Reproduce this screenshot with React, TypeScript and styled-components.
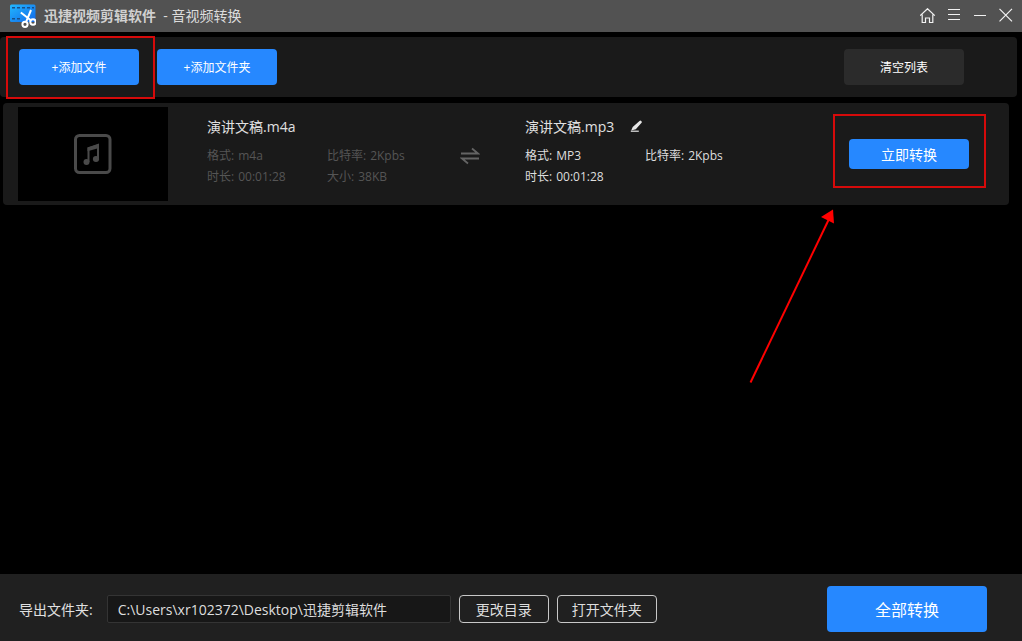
import React from "react";
import styled, { createGlobalStyle } from "styled-components";

const GlobalStyle = createGlobalStyle`
  * { box-sizing: border-box; }
  body {
    margin: 0;
    background: #000;
    color: #e0e0e0;
    font-family: "Open Sans", "Noto Sans CJK SC", sans-serif;
    font-size: 12px;
  }
  button, input { font-family: inherit; }
  h1, h2, p, dl, dd { margin: 0; }
`;

const Page = styled.div`
  display: flex;
  flex-direction: column;
  min-height: 100vh;
`;

const TitleBar = styled.header`
  display: flex;
  align-items: center;
  height: 32px;
  padding: 0 8px;
  background: #525252;
`;

const AppTitle = styled.h1`
  margin-left: 8px;
  font-size: 14px;
  line-height: 20px;
  font-weight: 400;
  color: #dcdcdc;
  white-space: pre;
`;

const AppName = styled.strong`
  font-weight: 700;
  color: #d0d0d0;
`;

const WindowControls = styled.div`
  display: flex;
  gap: 10px;
  margin-left: auto;
`;

const IconButton = styled.button`
  display: flex;
  padding: 0;
  border: 0;
  background: none;
  color: #f2f2f2;
  cursor: pointer;
`;

const Toolbar = styled.section`
  display: flex;
  align-items: center;
  gap: 18px;
  height: 60px;
  margin: 5px 5px 6px 0;
  padding: 0 53px 0 19px;
  border-radius: 4px;
  background: #1a1a1a;
`;

const Button = styled.button<{
  $w: number;
  $h: number;
  $size?: number;
  $tone?: "primary" | "muted" | "outline";
}>`
  flex: none;
  width: ${(p) => p.$w}px;
  height: ${(p) => p.$h}px;
  padding: 0;
  border: ${(p) => (p.$tone === "outline" ? "1px solid #c8c8c8" : "0")};
  border-radius: 4px;
  background: ${(p) =>
    p.$tone === "outline" ? "transparent" : p.$tone === "muted" ? "#2b2b2b" : "#2688ff"};
  color: ${(p) => (p.$tone === "outline" ? "#dedede" : "#fff")};
  font-size: ${(p) => p.$size ?? 12}px;
  cursor: pointer;
`;

const PushRight = styled.div`
  position: relative;
  display: flex;
  margin-left: auto;
`;

const Marked = styled.div`
  position: relative;
  display: flex;
`;

const Highlight = styled.span<{ $inset: string }>`
  position: absolute;
  inset: ${(p) => p.$inset};
  border: 2px solid #d60a0a;
  pointer-events: none;
`;

const Arrow = styled.svg`
  position: absolute;
  top: 69px;
  left: -101px;
  pointer-events: none;
`;

const FileList = styled.main`
  flex: 1;
  padding: 0 13px 0 3px;
`;

const FileRow = styled.article`
  display: flex;
  align-items: center;
  min-height: 102px;
  padding: 4px 40px 4px 15px;
  border-radius: 4px;
  background: #1a1a1a;
`;

const Thumbnail = styled.div`
  display: flex;
  align-items: center;
  justify-content: center;
  flex: none;
  width: 150px;
  height: 94px;
  background: #000;
`;

const FileInfo = styled.section`
  flex: none;
  width: 240px;
  padding-bottom: 4px;
`;

const FileName = styled.h2`
  display: flex;
  align-items: center;
  gap: 16px;
  margin-bottom: 8px;
  font-size: 14px;
  line-height: 20px;
  font-weight: 400;
`;

const Details = styled.dl<{ $dim?: boolean }>`
  display: grid;
  grid-template-columns: 120px 120px;
  line-height: 21px;
  color: ${(p) => (p.$dim ? "#555" : "#dedede")};
`;

const Detail = styled.div`
  display: flex;
  gap: 4px;
`;

const Conversion = styled.div`
  display: flex;
  align-items: center;
  margin-left: 39px;
`;

const SwapSlot = styled.div`
  display: flex;
  flex: none;
  width: 78px;
  padding: 4px 0 0 13px;
`;

const Footer = styled.footer`
  display: flex;
  align-items: center;
  gap: 8px;
  min-height: 67px;
  padding: 2px 35px 0 19px;
  background: #202020;
`;

const PathLabel = styled.label`
  flex: none;
  margin-right: 6px;
  font-size: 14px;
`;

const PathInput = styled.input`
  flex: 0 1 344px;
  min-width: 0;
  height: 28px;
  padding: 0 10px;
  border: 1px solid #343434;
  border-radius: 2px;
  background: #171717;
  color: #dedede;
  font-size: 14px;
`;

const Logo = () => (
  <svg width="28" height="28" viewBox="0 0 28 28" aria-hidden="true">
    <defs>
      <linearGradient id="film" x1="0" y1="0" x2="1" y2="1">
        <stop offset="0" stopColor="#22b8ff" />
        <stop offset="1" stopColor="#1267e8" />
      </linearGradient>
    </defs>
    <rect x="2" y="2.5" width="25.5" height="17.5" rx="1.5" fill="url(#film)" />
    <path d="M4 5.8h22M4 16.8h10" stroke="#1a4f86" strokeWidth="1.6" strokeDasharray="3 2" />
    <g fill="none" stroke="#fff" strokeWidth="2">
      <path d="M23 8 18 20.2M12.8 10.5 22.8 18.3" />
      <circle cx="17" cy="22.3" r="2.6" />
      <circle cx="25" cy="20" r="2.7" />
    </g>
  </svg>
);

const HomeIcon = () => (
  <svg width="16" height="16" viewBox="0 0 16 16" fill="none" stroke="currentColor" strokeWidth="1.2">
    <path d="M.2 7.6 7.5.7 14.8 7.6M2.2 6.5v8h3.3V10h4v4.5h3.3v-8" />
  </svg>
);
const MenuIcon = () => (
  <svg width="16" height="16" viewBox="0 0 16 16" stroke="currentColor">
    <path d="M2 1.5h12M2 6.5h12M2 11.5h12" />
  </svg>
);
const MinimizeIcon = () => (
  <svg width="16" height="16" viewBox="0 0 16 16" stroke="currentColor">
    <path d="M2 7.5h12" />
  </svg>
);
const CloseIcon = () => (
  <svg width="16" height="16" viewBox="0 0 16 16" stroke="currentColor" strokeWidth="1.2">
    <path d="m1.5.8 12.5 12.5M14 .8 1.5 13.3" />
  </svg>
);

const MusicIcon = () => (
  <svg width="38" height="40" viewBox="0 0 38 40" aria-hidden="true">
    <rect x="1.5" y="1.5" width="34.5" height="37" rx="4" fill="none" stroke="#4a4a4a" strokeWidth="3" />
    <path d="M14.5 28V14.2l9.5-3.2v13.5" fill="none" stroke="#4a4a4a" strokeWidth="2" />
    <path d="M13.5 13.5 25 10v4l-11.5 3.3z" fill="#4a4a4a" />
    <ellipse cx="12.5" cy="28" rx="3" ry="2.9" fill="#4a4a4a" />
    <ellipse cx="22" cy="25" rx="3.1" ry="2.9" fill="#4a4a4a" />
  </svg>
);

const SwapIcon = () => (
  <svg width="20" height="18" viewBox="0 0 20 18" fill="none" stroke="#646464" strokeWidth="1.8" aria-hidden="true">
    <path d="M1 6.5h17L12 1.5M19 11.5H2L8 16.5" />
  </svg>
);

const PencilIcon = () => (
  <svg width="14" height="14" viewBox="0 0 14 14" fill="#e6e6e6">
    <path d="M9.5.9q.8-.7 1.7 0t.6 1.7L5.8 9.2 1.2 10.4 2.7 7.1z" />
    <path d="M.8 10.6h8v1.2h-8z" />
  </svg>
);

type Field = [string, string];

const source: Field[] = [
  ["格式:", "m4a"],
  ["比特率:", "2Kpbs"],
  ["时长:", "00:01:28"],
  ["大小:", "38KB"],
];
const target: Field[] = [
  ["格式:", "MP3"],
  ["比特率:", "2Kpbs"],
  ["时长:", "00:01:28"],
];

const FieldList = ({ fields, dim }: { fields: Field[]; dim?: boolean }) => (
  <Details $dim={dim}>
    {fields.map(([label, value]) => (
      <Detail key={label}>
        <dt>{label}</dt>
        <dd>{value}</dd>
      </Detail>
    ))}
  </Details>
);

export default function App() {
  return (
    <Page>
      <GlobalStyle />
      <TitleBar>
        <Logo />
        <AppTitle>
          <AppName>迅捷视频剪辑软件</AppName>
          {"  - 音视频转换"}
        </AppTitle>
        <WindowControls>
          <IconButton aria-label="主页"><HomeIcon /></IconButton>
          <IconButton aria-label="菜单"><MenuIcon /></IconButton>
          <IconButton aria-label="最小化"><MinimizeIcon /></IconButton>
          <IconButton aria-label="关闭"><CloseIcon /></IconButton>
        </WindowControls>
      </TitleBar>

      <Toolbar>
        <Marked>
          <Button $w={120} $h={36}>+添加文件</Button>
          <Highlight $inset="-13px -16px -14px -13px" />
        </Marked>
        <Button $w={120} $h={36}>+添加文件夹</Button>
        <PushRight>
          <Button $w={120} $h={36} $tone="muted">清空列表</Button>
        </PushRight>
      </Toolbar>

      <FileList>
        <FileRow>
          <Thumbnail><MusicIcon /></Thumbnail>
          <Conversion>
            <FileInfo>
              <FileName>演讲文稿.m4a</FileName>
              <FieldList fields={source} dim />
            </FileInfo>
            <SwapSlot><SwapIcon /></SwapSlot>
            <FileInfo>
              <FileName>
                演讲文稿.mp3
                <IconButton aria-label="重命名"><PencilIcon /></IconButton>
              </FileName>
              <FieldList fields={target} />
            </FileInfo>
          </Conversion>
          <PushRight>
            <Button $w={120} $h={30} $size={14}>立即转换</Button>
            <Highlight $inset="-25px -17px -19px -16px" />
            <Arrow width="88" height="178" viewBox="0 0 88 178" aria-hidden="true">
              <path d="M2.5 174.5 81 11" stroke="#f00" strokeWidth="2" />
              <path d="M85 1.5 86 15.5 73 9z" fill="#f00" />
            </Arrow>
          </PushRight>
        </FileRow>
      </FileList>

      <Footer>
        <PathLabel htmlFor="export-path">导出文件夹:</PathLabel>
        <PathInput id="export-path" defaultValue={"C:\\Users\\xr102372\\Desktop\\迅捷剪辑软件"} />
        <Button $w={90} $h={28} $size={14} $tone="outline">更改目录</Button>
        <Button $w={100} $h={28} $size={14} $tone="outline">打开文件夹</Button>
        <PushRight>
          <Button $w={160} $h={46} $size={16}>全部转换</Button>
        </PushRight>
      </Footer>
    </Page>
  );
}
